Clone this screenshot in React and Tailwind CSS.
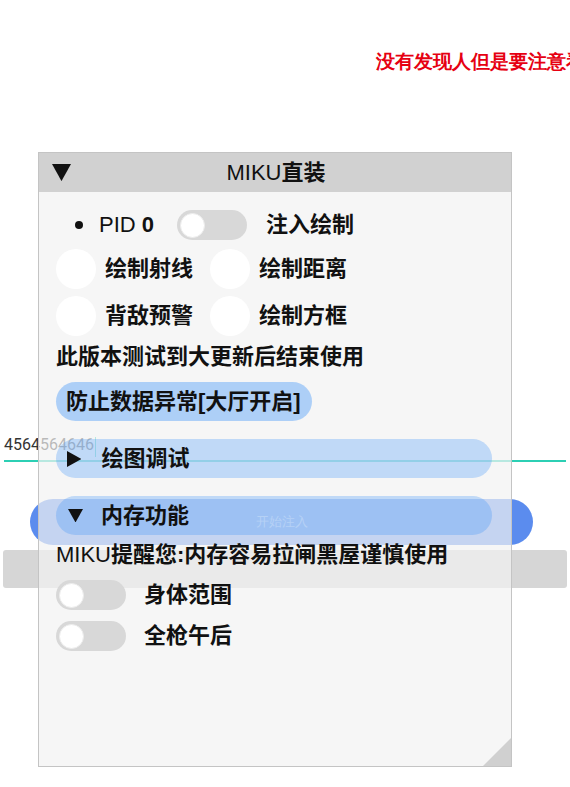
import React from "react";

const FONT = { fontFamily: '"Liberation Sans", "Noto Sans CJK SC", sans-serif' };

const TriDown = ({ size = 16 }) => (
    <svg width={size} height={size * 0.9} viewBox="0 0 20 18">
        <polygon points="0,0 20,0 10,18" fill="#111" />
    </svg>
);

const TriRight = ({ size = 16 }) => (
    <svg width={size * 0.9} height={size} viewBox="0 0 18 20">
        <polygon points="0,0 18,10 0,20" fill="#111" />
    </svg>
);

const Toggle = () => (
    <div className="w-[70px] h-[30px] rounded-full bg-[#d8d8d8] flex items-center px-[3px] shrink-0">
        <div className="w-[25px] h-[25px] rounded-full bg-white border border-[#ececec]" />
    </div>
);

const Circle = () => <div className="w-[40px] h-[40px] rounded-full bg-white shrink-0" />;

function Background() {
    return (
        <div className="relative w-[570px] h-[787px] bg-white overflow-hidden">
            <div className="pt-[48px] pl-[376px] whitespace-nowrap text-[19px] font-bold text-[#e60012] leading-[26px]">
                没有发现人但是要注意看周围
            </div>
            <div className="mt-[359px] mx-[4px]">
                <div className="flex items-end h-[24px] text-[16px] text-[#333]" style={{ fontFamily: '"Roboto", sans-serif' }}>
                    <span>4564564646</span>
                    <span className="w-[1.5px] h-[20px] bg-[#2ccfb4] ml-[1px]" />
                </div>
                <div className="mt-[3px] h-[2px] bg-[#2ccfb4]" />
            </div>
            <div className="mt-[37px] ml-[30px] w-[503px] h-[46px] rounded-full bg-[#5b8cee] flex items-center justify-center text-[13px] text-white/70">
                开始注入
            </div>
            <div className="mt-[5px] ml-[3px] w-[564px] h-[38px] rounded-[3px] bg-[#d6d6d6]" />
        </div>
    );
}

function MenuWindow() {
    return (
        <div className="absolute left-[38px] top-[152px] w-[474px] h-[615px] border border-[#c4c4c4] bg-[#f2f2f2]/70 text-[#111] font-semibold" style={FONT}>
            <div className="h-[39px] bg-[#d1d1d1] flex items-center relative">
                <div className="ml-[13px]">
                    <TriDown size={19} />
                </div>
                <div className="absolute inset-0 flex items-center justify-center text-[22px] leading-none pl-[2px]">
                    <span className="font-normal">MIKU</span>直装
                </div>
            </div>
            <div className="pl-[17px] text-[22px] leading-none">
                <div className="mt-[18px] h-[30px] flex items-center">
                    <div className="w-[8px] h-[8px] rounded-full bg-[#111] ml-[19px]" />
                    <span className="ml-[16px] w-[62px] font-normal">PID <span className="font-bold">0</span></span>
                    <div className="ml-[16px]">
                        <Toggle />
                    </div>
                    <span className="ml-[19px]">注入绘制</span>
                </div>
                <div className="mt-[9px] h-[40px] flex items-center">
                    <Circle />
                    <span className="ml-[9px] w-[105px]">绘制射线</span>
                    <Circle />
                    <span className="ml-[9px]">绘制距离</span>
                </div>
                <div className="mt-[7px] h-[40px] flex items-center">
                    <Circle />
                    <span className="ml-[9px] w-[105px]">背敌预警</span>
                    <Circle />
                    <span className="ml-[9px]">绘制方框</span>
                </div>
                <div className="mt-[9px] h-[24px] flex items-center">此版本测试到大更新后结束使用</div>
                <div className="mt-[13px] h-[39px] w-[256px] rounded-full bg-[#4296fa]/40 flex items-center pl-[10px]">
                    防止数据异常[大厅开启]
                </div>
                <div className="mt-[18px] h-[39px] w-[436px] rounded-full bg-[#4296fa]/30 flex items-center pl-[11px]">
                    <TriRight size={16} />
                    <span className="ml-[20px]">绘图调试</span>
                </div>
                <div className="mt-[18px] h-[39px] w-[436px] rounded-full bg-[#4296fa]/30 flex items-center pl-[12px]">
                    <TriDown size={15} />
                    <span className="ml-[18px]">内存功能</span>
                </div>
                <div className="mt-[8px] h-[24px] flex items-center">
                    <span className="font-normal">MIKU</span>提醒您:内存容易拉闸黑屋谨慎使用
                </div>
                <div className="mt-[13px] h-[30px] flex items-center">
                    <Toggle />
                    <span className="ml-[18px]">身体范围</span>
                </div>
                <div className="mt-[11px] h-[30px] flex items-center">
                    <Toggle />
                    <span className="ml-[18px]">全枪午后</span>
                </div>
            </div>
            <svg className="absolute right-0 bottom-0" width="28" height="28" viewBox="0 0 28 28">
                <polygon points="28,0 28,28 0,28" fill="#d0d0d0" />
            </svg>
        </div>
    );
}

export default function App() {
    return (
        <div className="relative w-[570px] h-[787px]">
            <Background />
            <MenuWindow />
        </div>
    );
}
